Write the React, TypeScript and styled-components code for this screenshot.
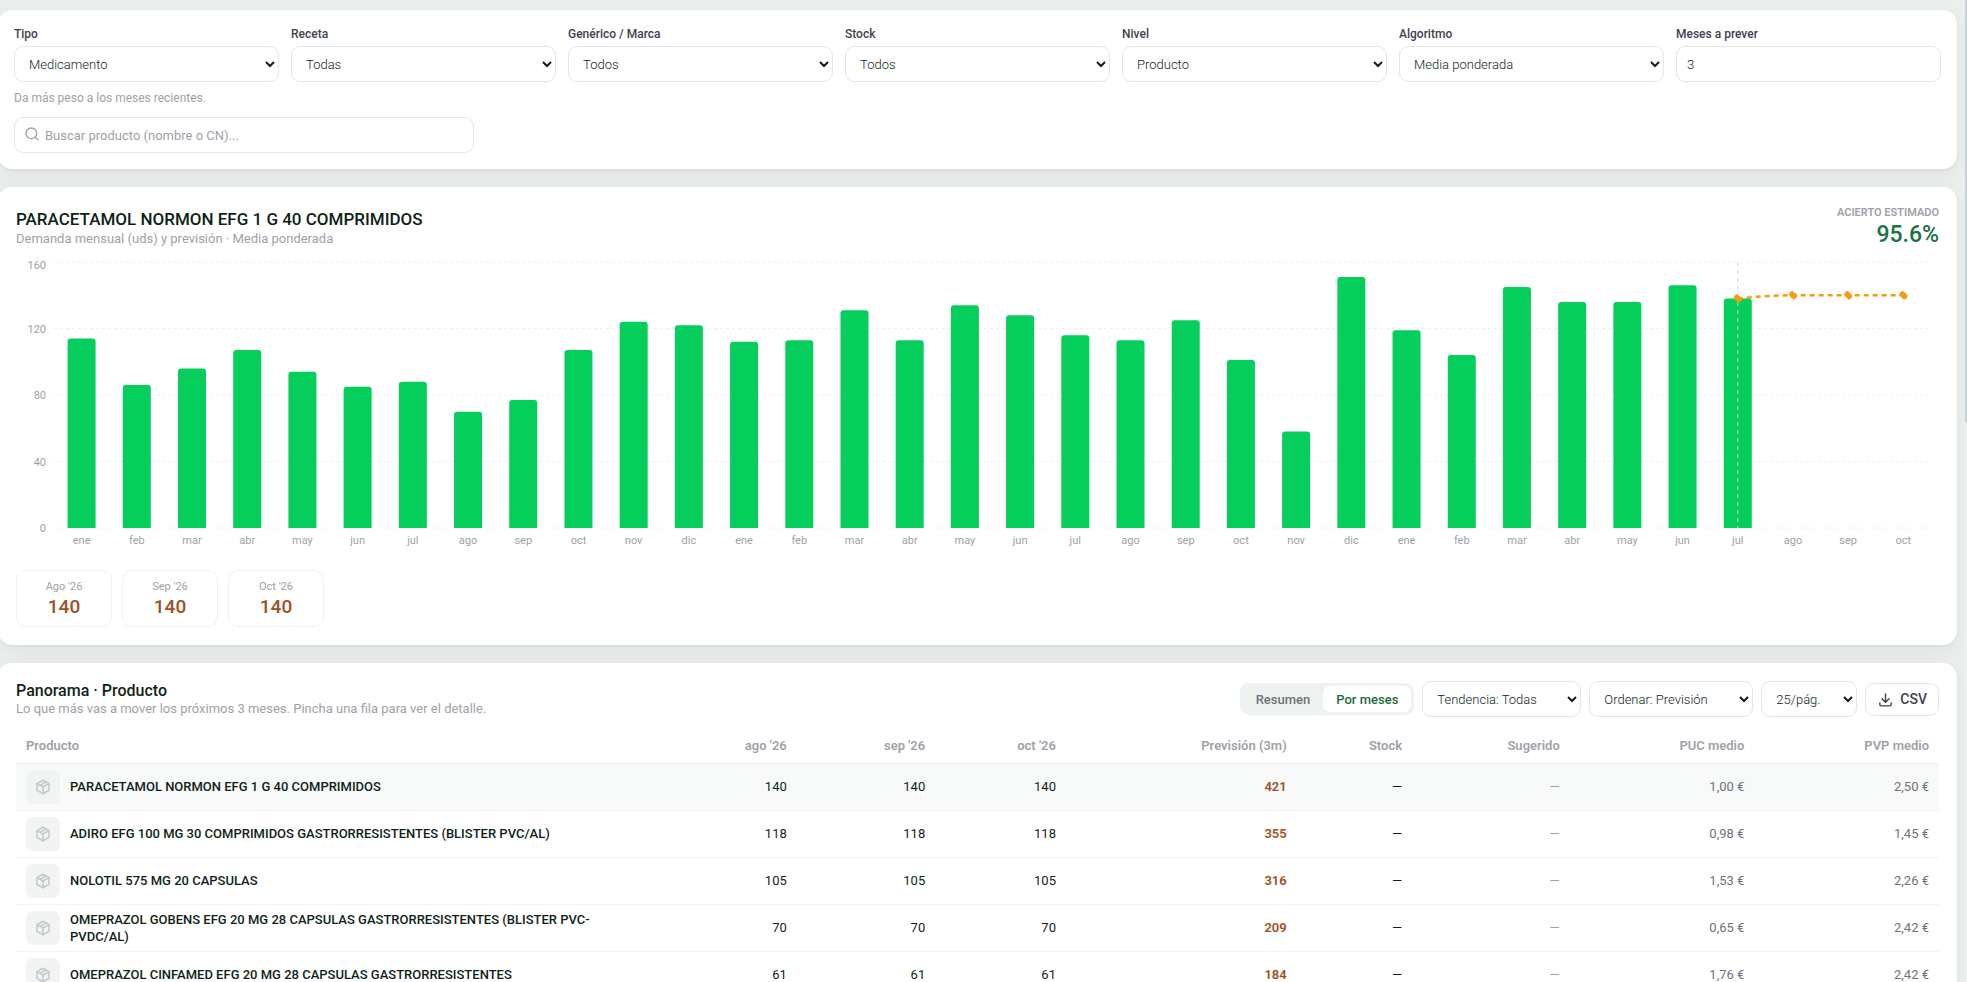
import { FC, ReactNode, useEffect, useRef, useState } from "react";
import styled, { createGlobalStyle } from "styled-components";
import { Search } from "lucide-react";
import { TbDownload, TbPackage } from "react-icons/tb";

const GlobalStyle = createGlobalStyle`
	*, *::before, *::after {
		box-sizing: border-box;
	}

	html {
		background: #ebefed;
		overflow: hidden;
	}

	body {
		margin: 0;
		font-family: Roboto, "Liberation Sans", sans-serif;
		font-size: 13px;
		line-height: 17px;
		color: #0f1f17;
	}

	button, input, select {
		font: inherit;
		color: inherit;
	}
`;

const Shell = styled("div")`
	display: flex;
	height: 100vh;
	overflow: hidden;
`;

const Page = styled("main")`
	flex: 1;
	min-width: 0;
	margin-left: -2px;
	padding: 10px 8px 0 0;
	display: flex;
	flex-direction: column;
	gap: 18px;
`;

const ScrollTrack = styled("div")`
	width: 2px;
	height: 100%;
	background: #eef1f2;
`;

const ScrollThumb = styled("div")`
	height: 43%;
	background: #c9d0d8;
`;

const Card = styled("section")<{ $padding?: string }>`
	flex-shrink: 0;
	padding: ${({ $padding }) => $padding || "18px"};
	background: #fff;
	border-radius: 14px;
	box-shadow: 0 1px 3px rgba(15, 31, 23, 0.06),
		0 6px 22px rgba(15, 31, 43, 0.06);
`;

const Filters = styled("div")`
	display: grid;
	grid-template-columns: repeat(7, minmax(0, 1fr));
	gap: 12px;
`;

const Field = styled("label")`
	display: flex;
	flex-direction: column;
	gap: 4px;
	font-size: 12px;
	line-height: 16px;
	font-weight: 500;
	color: #3f3f50;
`;

const Select = styled("select")`
	height: 36px;
	padding: 0 0 0 10px;
	background: #fff;
	border: 1px solid #e4e6ea;
	border-radius: 9px;
	font-size: 13px;
	font-weight: 300;
	color: #0f1f17;
`;

const Input = styled("input")`
	width: 100%;
	height: 36px;
	padding: 0 10px;
	background: #fff;
	border: 1px solid #e4e6ea;
	border-radius: 9px;
	font-size: 13px;
	font-weight: 300;
	color: #0f1f17;
`;

const Hint = styled("p")`
	margin: 8px 0 10px;
	font-size: 12px;
	line-height: 17px;
	color: #9f9faa;
`;

const SearchBox = styled("div")`
	position: relative;
	max-width: 460px;

	svg {
		position: absolute;
		left: 10px;
		top: 9px;
		color: #9f9faa;
	}

	input {
		padding-left: 30px;
		font-weight: 400;
	}

	input::placeholder {
		color: #9f9faa;
	}
`;

const CardHead = styled("div")`
	display: flex;
	justify-content: space-between;
	align-items: center;
	gap: 16px;
`;

const Title = styled("h2")<{ $small?: boolean }>`
	margin: 0;
	font-size: ${({ $small }) => ($small ? 16 : 17)}px;
	line-height: ${({ $small }) => ($small ? 19 : 22)}px;
	font-weight: 500;
`;

const Subtitle = styled("p")`
	margin: 0;
	color: #9f9faa;
`;

const Accuracy = styled("div")`
	text-align: right;
`;

const AccuracyLabel = styled("div")`
	font-size: 11px;
	line-height: 16px;
	font-weight: 600;
	color: #9f9faa;
`;

const AccuracyValue = styled("div")`
	font-size: 23px;
	line-height: 28px;
	font-weight: 500;
	color: #1c7243;
`;

const ChartBox = styled("div")`
	height: 300px;
	margin-top: 5px;

	svg {
		display: block;
	}

	text {
		font-size: 11px;
		fill: #9f9faa;
	}
`;

const Forecasts = styled("div")`
	display: flex;
	gap: 10px;
	margin-top: 16px;
`;

const ForecastCard = styled("div")`
	width: 96px;
	padding: 8px 0;
	text-align: center;
	border: 1px solid #f0f1f3;
	border-radius: 10px;
`;

const ForecastLabel = styled("div")`
	font-size: 11px;
	line-height: 16px;
	color: #9f9faa;
`;

const ForecastValue = styled("div")`
	font-size: 19px;
	line-height: 23px;
	font-weight: 500;
	color: #a0501c;
`;

const Toolbar = styled("div")`
	display: flex;
	align-items: center;
	gap: 8px;
`;

const Segment = styled("div")`
	display: flex;
	padding: 3px;
	background: #eef2f0;
	border-radius: 9px;
`;

const SegmentButton = styled("button")<{ $active?: boolean }>`
	height: 26px;
	padding: 0 13px;
	border: none;
	border-radius: 7px;
	background: ${({ $active }) => ($active ? "#fff" : "transparent")};
	color: ${({ $active }) => ($active ? "#1c6b3f" : "#71717b")};
	font-weight: 500;
	cursor: pointer;
`;

const ToolSelect = styled(Select)<{ $width: number }>`
	width: ${({ $width }) => $width}px;
`;

const CsvButton = styled("button")`
	display: flex;
	align-items: center;
	gap: 6px;
	height: 33px;
	padding: 0 11px;
	background: #fff;
	border: 1px solid #e4e6ea;
	border-radius: 9px;
	font-size: 14px;
	font-weight: 500;
	color: #3f3f50;
	cursor: pointer;
`;

const Table = styled("table")`
	width: 100%;
	margin-top: 11px;
	table-layout: fixed;
	border-collapse: collapse;
`;

const Th = styled("th")<{ $width: number }>`
	width: ${({ $width }) => $width}%;
	height: 35px;
	padding: 0 10px;
	text-align: right;
	font-weight: 600;
	color: #9f9faa;
	border-bottom: 1px solid #eceef0;

	&:first-child {
		text-align: left;
	}
`;

const Row = styled("tr")<{ $selected?: boolean }>`
	background: ${({ $selected }) => ($selected ? "#f8faf9" : "#fff")};
	cursor: pointer;
`;

const Td = styled("td")<{ $tone?: "muted" | "faint" | "accent" }>`
	height: 47px;
	padding: 0 10px;
	text-align: right;
	border-bottom: 1px solid #f1f3f4;
	font-weight: ${({ $tone }) => ($tone === "accent" ? 600 : 400)};
	color: ${({ $tone }) =>
		$tone === "accent"
			? "#a0501c"
			: $tone === "muted"
			? "#71717b"
			: $tone === "faint"
			? "#9f9faa"
			: "#0f1f17"};
`;

const Product = styled("div")`
	display: flex;
	align-items: center;
	gap: 10px;
	text-align: left;
	font-weight: 500;
`;

const Thumb = styled("span")`
	display: flex;
	flex: none;
	align-items: center;
	justify-content: center;
	width: 34px;
	height: 34px;
	background: #f1f4f3;
	border-radius: 7px;
	color: #c3c8cc;
`;

const demand = [
	114, 86, 96, 107, 94, 85, 88, 70, 77, 107, 124, 122, 112, 113, 131, 113,
	134, 128, 116, 113, 125, 101, 58, 151, 119, 104, 145, 136, 136, 146, 138
];
const forecast = [138, 140, 140, 140];
const months = [
	"ene", "feb", "mar", "abr", "may", "jun",
	"jul", "ago", "sep", "oct", "nov", "dic"
];
const slots = demand.length + forecast.length - 1;

const DemandChart: FC = () => {
	const box = useRef<HTMLDivElement>(null);
	const [width, setWidth] = useState(1200);

	useEffect(() => {
		if (!box.current) return;
		const observer = new ResizeObserver(([entry]) =>
			setWidth(entry.contentRect.width)
		);
		observer.observe(box.current);
		return () => observer.disconnect();
	}, []);

	const left = 38;
	const right = width - 8;
	const top = 8;
	const bottom = 274;
	const step = (right - left) / slots;
	const x = (i: number) => left + step * (i + 0.5);
	const y = (v: number) => bottom - (v / 160) * (bottom - top);
	const last = demand.length - 1;
	const points = forecast.map((v, i) => [x(last + i), y(v)]);
	const [first, ...rest] = points;
	const third = step / 3;
	const line =
		`M${first[0]},${first[1]}` +
		`C${first[0] + third},${first[1] - 2} ${rest[0][0] - third},${rest[0][1]} ${rest[0][0]},${rest[0][1]}` +
		rest.slice(1).map(([px, py]) => `L${px},${py}`).join("");

	return (
		<ChartBox ref={box}>
			<svg width={width} height={300} role="img" aria-label="Demanda mensual y previsión">
				{[0, 40, 80, 120, 160].map((v) => (
					<g key={v}>
						<line
							x1={left}
							x2={right}
							y1={y(v)}
							y2={y(v)}
							stroke="#eef0f2"
							strokeDasharray="3 3"
						/>
						<text x={30} y={v === 160 ? y(v) + 7 : y(v) + 4} textAnchor="end">
							{v}
						</text>
					</g>
				))}
				{demand.map((v, i) => (
					<path
						key={i}
						d={`M${x(i) - 14},${bottom}V${y(v) + 3}q0,-3 3,-3h22q3,0 3,3V${bottom}Z`}
						fill="#05ce5c"
					/>
				))}
				{Array.from({ length: slots }, (_, i) => (
					<text key={i} x={x(i)} y={bottom + 16} textAnchor="middle">
						{months[i % 12]}
					</text>
				))}
				<line
					x1={x(last)}
					x2={x(last)}
					y1={top}
					y2={bottom}
					stroke="#d1d5db"
					strokeDasharray="4 4"
				/>
				<path d={line} fill="none" stroke="#f39c12" strokeWidth="2.5" strokeDasharray="5 4" />
				{points.map(([px, py], i) => (
					<circle
						key={i}
						cx={px}
						cy={py}
						r={3}
						fill="#f39c12"
						stroke="#f39c12"
						strokeWidth="2.5"
						strokeDasharray="5 4"
					/>
				))}
			</svg>
		</ChartBox>
	);
};

const filters = [
	["Tipo", "Medicamento"],
	["Receta", "Todas"],
	["Genérico / Marca", "Todos"],
	["Stock", "Todos"],
	["Nivel", "Producto"],
	["Algoritmo", "Media ponderada"]
];

const columns: [string, number][] = [
	["Producto", 32],
	["ago '26", 8.6],
	["sep '26", 7.2],
	["oct '26", 6.8],
	["Previsión (3m)", 12],
	["Stock", 6],
	["Sugerido", 8.2],
	["PUC medio", 9.6],
	["PVP medio", 9.6]
];

interface IProduct {
	name: string;
	monthly: number;
	total: number;
	puc: string;
	pvp: string;
}

const products: IProduct[] = [
	{ name: "PARACETAMOL NORMON EFG 1 G 40 COMPRIMIDOS", monthly: 140, total: 421, puc: "1,00 €", pvp: "2,50 €" },
	{ name: "ADIRO EFG 100 MG 30 COMPRIMIDOS GASTRORRESISTENTES (BLISTER PVC/AL)", monthly: 118, total: 355, puc: "0,98 €", pvp: "1,45 €" },
	{ name: "NOLOTIL 575 MG 20 CAPSULAS", monthly: 105, total: 316, puc: "1,53 €", pvp: "2,26 €" },
	{ name: "OMEPRAZOL GOBENS EFG 20 MG 28 CAPSULAS GASTRORRESISTENTES (BLISTER PVC-PVDC/AL)", monthly: 70, total: 209, puc: "0,65 €", pvp: "2,42 €" },
	{ name: "OMEPRAZOL CINFAMED EFG 20 MG 28 CAPSULAS GASTRORRESISTENTES", monthly: 61, total: 184, puc: "1,76 €", pvp: "2,42 €" }
];

const FilterField: FC<{ label: string; children: ReactNode }> = ({ label, children }) => (
	<Field>
		{label}
		{children}
	</Field>
);

const ProductRow: FC<{ item: IProduct; selected: boolean; onSelect: () => void }> = ({
	item,
	selected,
	onSelect
}) => (
	<Row $selected={selected} onClick={onSelect}>
		<Td>
			<Product>
				<Thumb>
					<TbPackage size={18} />
				</Thumb>
				{item.name}
			</Product>
		</Td>
		<Td>{item.monthly}</Td>
		<Td>{item.monthly}</Td>
		<Td>{item.monthly}</Td>
		<Td $tone="accent">{item.total}</Td>
		<Td>—</Td>
		<Td $tone="faint">—</Td>
		<Td $tone="muted">{item.puc}</Td>
		<Td $tone="muted">{item.pvp}</Td>
	</Row>
);

export default function App() {
	const [selected, setSelected] = useState(0);
	const [view, setView] = useState("Por meses");

	return (
		<Shell>
			<GlobalStyle />
			<Page>
				<Card $padding="16px">
					<Filters>
						{filters.map(([label, value]) => (
							<FilterField key={label} label={label}>
								<Select>
									<option>{value}</option>
								</Select>
							</FilterField>
						))}
						<FilterField label="Meses a prever">
							<Input defaultValue="3" inputMode="numeric" />
						</FilterField>
					</Filters>
					<Hint>Da más peso a los meses recientes.</Hint>
					<SearchBox>
						<Search size={16} />
						<Input
							aria-label="Buscar producto"
							placeholder="Buscar producto (nombre o CN)..."
						/>
					</SearchBox>
				</Card>

				<Card>
					<CardHead>
						<div>
							<Title>PARACETAMOL NORMON EFG 1 G 40 COMPRIMIDOS</Title>
							<Subtitle>Demanda mensual (uds) y previsión · Media ponderada</Subtitle>
						</div>
						<Accuracy>
							<AccuracyLabel>ACIERTO ESTIMADO</AccuracyLabel>
							<AccuracyValue>95.6%</AccuracyValue>
						</Accuracy>
					</CardHead>
					<DemandChart />
					<Forecasts>
						{["Ago '26", "Sep '26", "Oct '26"].map((month) => (
							<ForecastCard key={month}>
								<ForecastLabel>{month}</ForecastLabel>
								<ForecastValue>140</ForecastValue>
							</ForecastCard>
						))}
					</Forecasts>
				</Card>

				<Card>
					<CardHead>
						<div>
							<Title $small>Panorama · Producto</Title>
							<Subtitle>
								Lo que más vas a mover los próximos 3 meses. Pincha una fila para ver el detalle.
							</Subtitle>
						</div>
						<Toolbar>
							<Segment>
								{["Resumen", "Por meses"].map((name) => (
									<SegmentButton
										key={name}
										$active={view === name}
										onClick={() => setView(name)}
									>
										{name}
									</SegmentButton>
								))}
							</Segment>
							<ToolSelect $width={159} aria-label="Tendencia">
								<option>Tendencia: Todas</option>
							</ToolSelect>
							<ToolSelect $width={164} aria-label="Ordenar">
								<option>Ordenar: Previsión</option>
							</ToolSelect>
							<ToolSelect $width={96} aria-label="Filas por página">
								<option>25/pág.</option>
							</ToolSelect>
							<CsvButton>
								<TbDownload size={17} />
								CSV
							</CsvButton>
						</Toolbar>
					</CardHead>
					<Table>
						<thead>
							<tr>
								{columns.map(([name, width]) => (
									<Th key={name} $width={width}>
										{name}
									</Th>
								))}
							</tr>
						</thead>
						<tbody>
							{products.map((item, i) => (
								<ProductRow
									key={item.name}
									item={item}
									selected={selected === i}
									onSelect={() => setSelected(i)}
								/>
							))}
						</tbody>
					</Table>
				</Card>
			</Page>
			<ScrollTrack>
				<ScrollThumb />
			</ScrollTrack>
		</Shell>
	);
}
